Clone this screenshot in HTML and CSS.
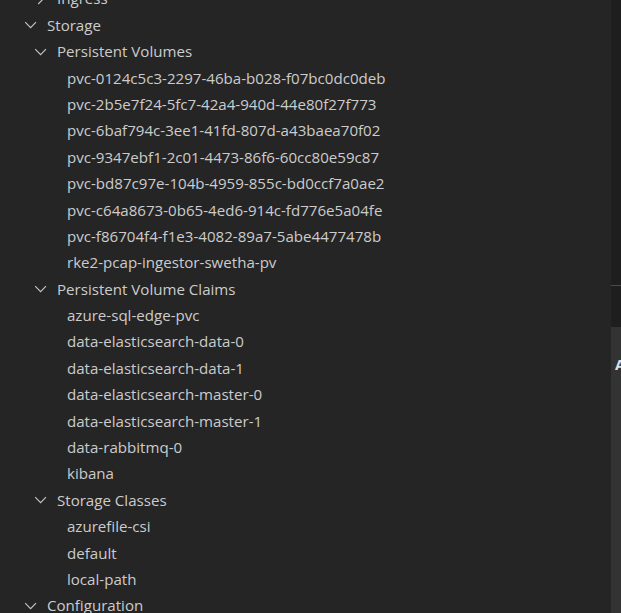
FILE: index.html
```html
<!DOCTYPE html>
<html>
<head>
<meta charset="utf-8">
<link rel="stylesheet" href="styles.css">
</head>
<body>
<div class="app">
  <div class="tree">
    <div class="row l1"><span class="tw"><svg viewBox="0 0 16 16"><polyline points="6,3.5 10.5,8 6,12.5"/></svg></span><span class="label">Ingress</span></div>
    <div class="row l0"><span class="tw"><svg viewBox="0 0 16 16"><polyline points="3.5,6 8,10.5 12.5,6"/></svg></span><span class="label">Storage</span></div>
    <div class="row l1"><span class="tw"><svg viewBox="0 0 16 16"><polyline points="3.5,6 8,10.5 12.5,6"/></svg></span><span class="label">Persistent Volumes</span></div>
    <div class="row l2"><span class="tw"></span><span class="label">pvc-0124c5c3-2297-46ba-b028-f07bc0dc0deb</span></div>
    <div class="row l2"><span class="tw"></span><span class="label">pvc-2b5e7f24-5fc7-42a4-940d-44e80f27f773</span></div>
    <div class="row l2"><span class="tw"></span><span class="label">pvc-6baf794c-3ee1-41fd-807d-a43baea70f02</span></div>
    <div class="row l2"><span class="tw"></span><span class="label">pvc-9347ebf1-2c01-4473-86f6-60cc80e59c87</span></div>
    <div class="row l2"><span class="tw"></span><span class="label">pvc-bd87c97e-104b-4959-855c-bd0ccf7a0ae2</span></div>
    <div class="row l2"><span class="tw"></span><span class="label">pvc-c64a8673-0b65-4ed6-914c-fd776e5a04fe</span></div>
    <div class="row l2"><span class="tw"></span><span class="label">pvc-f86704f4-f1e3-4082-89a7-5abe4477478b</span></div>
    <div class="row l2"><span class="tw"></span><span class="label">rke2-pcap-ingestor-swetha-pv</span></div>
    <div class="row l1"><span class="tw"><svg viewBox="0 0 16 16"><polyline points="3.5,6 8,10.5 12.5,6"/></svg></span><span class="label">Persistent Volume Claims</span></div>
    <div class="row l2"><span class="tw"></span><span class="label">azure-sql-edge-pvc</span></div>
    <div class="row l2"><span class="tw"></span><span class="label">data-elasticsearch-data-0</span></div>
    <div class="row l2"><span class="tw"></span><span class="label">data-elasticsearch-data-1</span></div>
    <div class="row l2"><span class="tw"></span><span class="label">data-elasticsearch-master-0</span></div>
    <div class="row l2"><span class="tw"></span><span class="label">data-elasticsearch-master-1</span></div>
    <div class="row l2"><span class="tw"></span><span class="label">data-rabbitmq-0</span></div>
    <div class="row l2"><span class="tw"></span><span class="label">kibana</span></div>
    <div class="row l1"><span class="tw"><svg viewBox="0 0 16 16"><polyline points="3.5,6 8,10.5 12.5,6"/></svg></span><span class="label">Storage Classes</span></div>
    <div class="row l2"><span class="tw"></span><span class="label">azurefile-csi</span></div>
    <div class="row l2"><span class="tw"></span><span class="label">default</span></div>
    <div class="row l2"><span class="tw"></span><span class="label">local-path</span></div>
    <div class="row l0"><span class="tw"><svg viewBox="0 0 16 16"><polyline points="3.5,6 8,10.5 12.5,6"/></svg></span><span class="label">Configuration</span></div>
  </div>
  <div class="side">
    <div class="side-top"></div>
    <div class="side-mid"></div>
    <div class="side-panel"><span class="side-text">Au</span></div>
  </div>
</div>
</body>
</html>
```

FILE: styles.css
```css
html, body {
  margin: 0;
  padding: 0;
  background: #252526;
  height: 613px;
  overflow: hidden;
}

.app {
  display: flex;
  height: 613px;
  overflow: hidden;
}

.tree {
  flex: 1;
  margin-top: -14.6px;
  font-family: "Open Sans", "Noto Sans", sans-serif;
  font-size: 15.1px;
  color: #cccccc;
}

.row {
  display: flex;
  align-items: center;
  height: 26.4px;
  white-space: nowrap;
}

.l0 { padding-left: 20.6px; }
.l1 { padding-left: 30.6px; }
.l2 { padding-left: 40.6px; }

.tw {
  width: 19.2px;
  height: 19.2px;
  margin-right: 7.2px;
  flex: none;
  display: flex;
}

.tw svg {
  width: 19.2px;
  height: 19.2px;
  fill: none;
  stroke: #c5c5c5;
  stroke-width: 0.95;
}

.label {
  line-height: 26.4px;
}

.side {
  width: 10px;
  flex: none;
  display: flex;
  flex-direction: column;
  background: #1e1e1e;
  overflow: hidden;
}

.side-top {
  height: 285px;
  border-bottom: 1px solid #4b4b4b;
  flex: none;
}

.side-mid {
  height: 41px;
  flex: none;
}

.side-panel {
  flex: 1;
  background: #333333;
  padding-left: 4px;
  padding-top: 28px;
  font-family: "Open Sans", sans-serif;
  font-weight: 700;
  font-size: 15px;
  line-height: 18px;
  color: #e0e0e0;
  white-space: nowrap;
}
```
